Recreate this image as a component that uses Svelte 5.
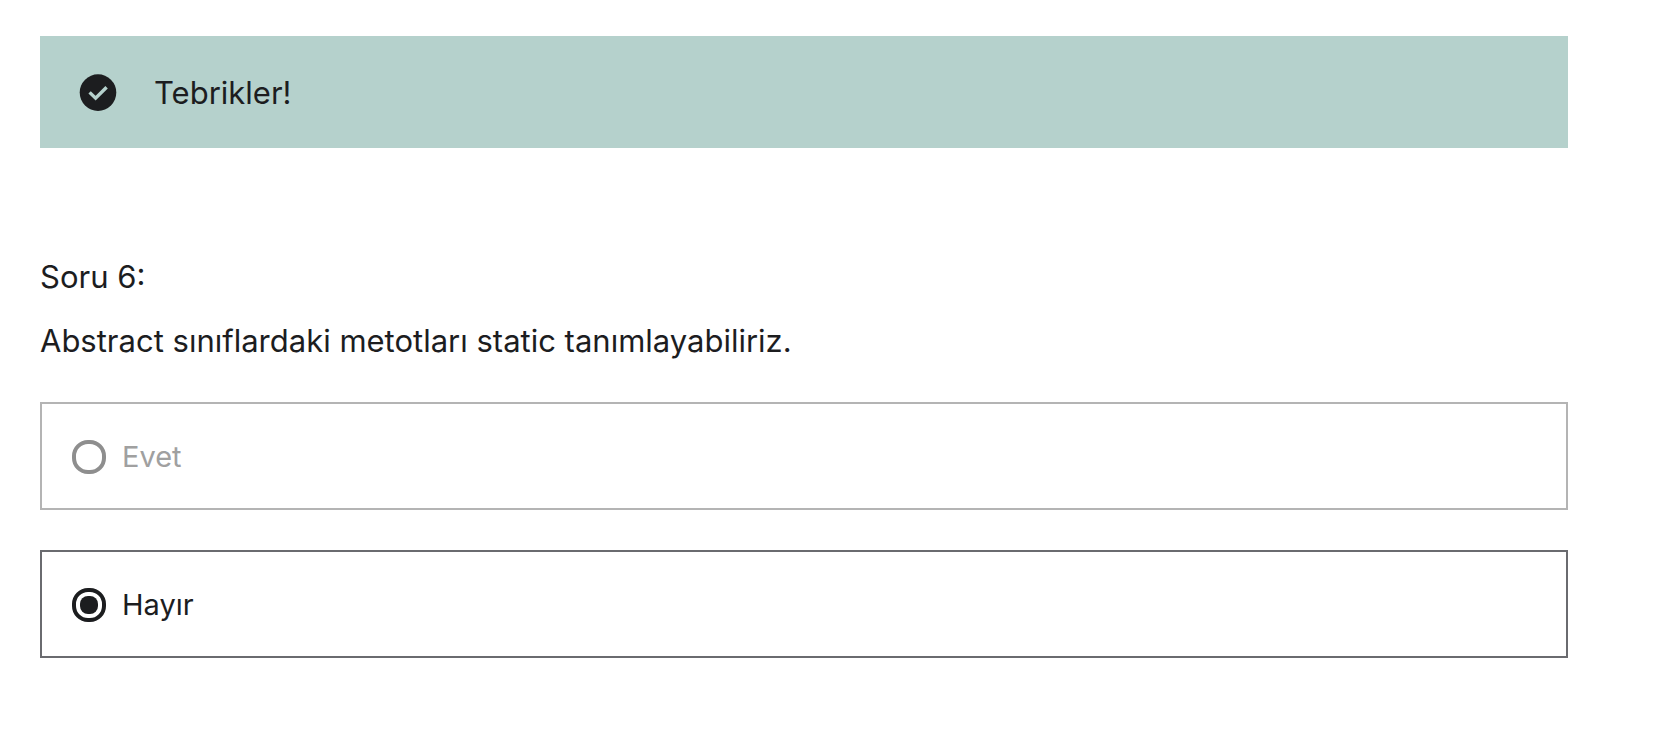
<script>
  const options = [
    { value: 'evet', label: 'Evet', disabled: true },
    { value: 'hayir', label: 'Hayır', disabled: false }
  ];
  let answer = $state('hayir');
</script>

<main>
  <div class="banner" role="status">
    <svg viewBox="0 0 38 38" width="38" height="38" aria-hidden="true">
      <circle cx="19" cy="18.6" r="18.3" fill="#1c1d1f" />
      <path d="M10.6 18.4 L16.6 24.2 L27.6 13.2" fill="none" stroke="#b5d1cc" stroke-width="3.4" />
    </svg>
    <span>Tebrikler!</span>
  </div>

  <form>
    <fieldset>
      <legend>Soru 6:</legend>
      <p>Abstract sınıflardaki metotları static tanımlayabiliriz.</p>
      <div class="options">
        {#each options as option}
          <label class="option" class:disabled={option.disabled}>
            <input
              type="radio"
              name="answer"
              value={option.value}
              disabled={option.disabled}
              bind:group={answer}
            />
            <span>{option.label}</span>
          </label>
        {/each}
      </div>
    </fieldset>
  </form>
</main>

<style>
  :global(body) {
    background: #fff;
  }

  main {
    padding: 36px 90px 40px 40px;
    color: #1c1d1f;
    font-family: Inter, "Liberation Sans", sans-serif;
    font-size: 31px;
    line-height: 44px;
  }

  .banner {
    display: flex;
    align-items: center;
    gap: 37px;
    padding: 35px 39px 33px;
    background: #b5d1cc;
  }

  form {
    margin-top: 107px;
  }

  fieldset {
    min-width: 0;
    margin: 0;
    padding: 0;
    border: 0;
  }

  legend {
    padding: 0;
  }

  p {
    margin: 20px 0 39px;
  }

  .options {
    display: grid;
    gap: 40px;
  }

  .option {
    display: flex;
    align-items: center;
    gap: 16px;
    padding: 31px 30px 29px;
    border: 2px solid #6a6b6f;
    font-size: 29px;
  }

  .option.disabled {
    border-color: #b4b4b4;
    color: #a0a0a0;
  }

  input {
    display: grid;
    flex: none;
    place-items: center;
    box-sizing: border-box;
    width: 34px;
    height: 34px;
    margin: 0;
    appearance: none;
    border: 4px solid #1c1d1f;
    border-radius: 16px;
  }

  input:disabled {
    border-color: #8e8e8e;
  }

  input:checked::before {
    width: 18px;
    height: 18px;
    border-radius: 8px;
    background: #1c1d1f;
    content: "";
  }
</style>
